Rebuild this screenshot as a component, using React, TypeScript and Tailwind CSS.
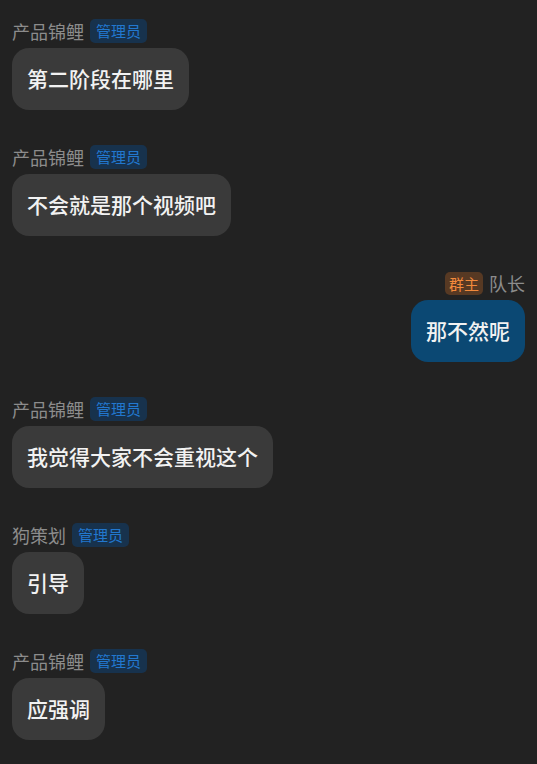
const messages = [
  { name: '产品锦鲤', role: 'admin', text: '第二阶段在哪里' },
  { name: '产品锦鲤', role: 'admin', text: '不会就是那个视频吧' },
  { name: '队长', role: 'owner', text: '那不然呢', self: true },
  { name: '产品锦鲤', role: 'admin', text: '我觉得大家不会重视这个' },
  { name: '狗策划', role: 'admin', text: '引导' },
  { name: '产品锦鲤', role: 'admin', text: '应强调' },
];

function RoleBadge({ role }: { role: string }) {
  if (role === 'owner') {
    return (
      <span className="h-[23px] px-[4px] rounded-[5px] bg-[#573923] text-[#f28a3c] text-[15px] leading-[23px]">
        群主
      </span>
    );
  }
  return (
    <span className="h-[24px] px-[6px] rounded-[5px] bg-[#17324d] text-[#2278cf] text-[15px] leading-[24px]">
      管理员
    </span>
  );
}

export default function App() {
  return (
    <div
      className="min-h-[764px] bg-[#222222] px-3 pt-[19px] pb-6 flex flex-col gap-[35px]"
      style={{ fontFamily: '"Noto Sans CJK SC", "Noto Sans", sans-serif' }}
    >
      {messages.map((m, i) => (
        <div key={i} className={`flex flex-col gap-[5px] ${m.self ? 'items-end' : 'items-start'}`}>
          <div className="flex items-center gap-[6px] h-[24px]">
            {m.self ? (
              <>
                <RoleBadge role={m.role} />
                <span className="text-[18px] leading-[24px] text-[#8c8c8c]">{m.name}</span>
              </>
            ) : (
              <>
                <span className="text-[18px] leading-[24px] text-[#8c8c8c]">{m.name}</span>
                <RoleBadge role={m.role} />
              </>
            )}
          </div>
          <div
            className={`rounded-[17px] px-[15px] pt-[15px] pb-[17px] text-[21px] leading-[30px] font-medium text-[#f2f2f2] ${
              m.self ? 'bg-[#0b4873]' : 'bg-[#3a3a3a]'
            }`}
          >
            {m.text}
          </div>
        </div>
      ))}
    </div>
  );
}
